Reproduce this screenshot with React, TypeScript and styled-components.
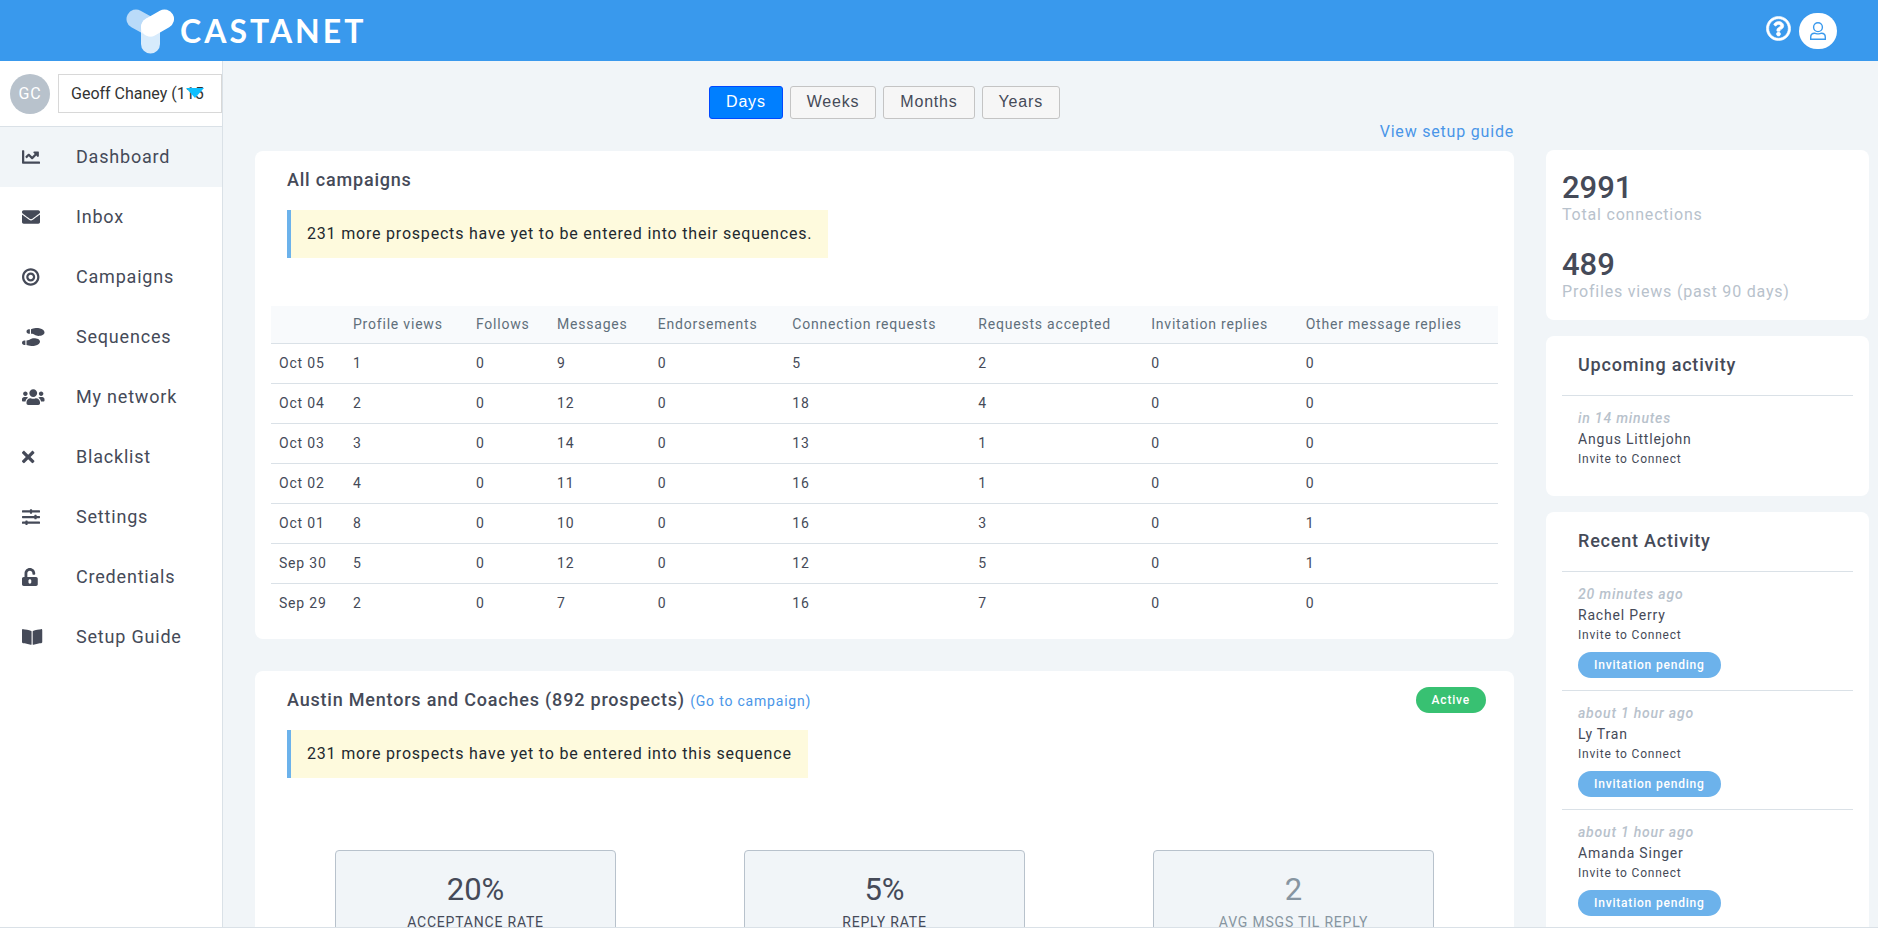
import React from 'react';
import styled, { createGlobalStyle, css } from 'styled-components';
import {
  FaChartLine,
  FaEnvelope,
  FaBullseye,
  FaShoePrints,
  FaUsers,
  FaTimes,
  FaSlidersH,
  FaUnlockAlt,
  FaBookOpen,
  FaRegQuestionCircle,
} from 'react-icons/fa';

const color = {
  brand: '#3999ed',
  canvas: '#f1f5f8',
  line: '#dae1e7',
  text: '#454a58',
  muted: '#8795a1',
  faint: '#b8c2cc',
  heading: '#606f7b',
  link: '#4a96e8',
  info: '#6cb2eb',
  success: '#38c172',
  note: '#fefadd',
};

const GlobalStyle = createGlobalStyle`
  *, *::before, *::after { box-sizing: border-box; }
  body {
    margin: 0;
    background: #fff;
    color: ${color.text};
    font: 400 16px/24px Roboto, sans-serif;
    letter-spacing: 0.05em;
  }
  h1, h2, p, ul, dl, dd { margin: 0; padding: 0; }
  ul { list-style: none; }
  button, select { font: inherit; letter-spacing: inherit; color: inherit; }
  a { color: ${color.link}; text-decoration: none; }
`;

const Page = styled.div`
  display: flex;
  flex-direction: column;
  height: 100vh;
  padding-bottom: 5px;
`;

const Header = styled.header`
  display: flex;
  flex: none;
  align-items: center;
  justify-content: space-between;
  height: 61px;
  padding: 0 41px 0 126px;
  background: ${color.brand};
  color: #fff;
`;

const Brand = styled.a`
  display: flex;
  align-items: center;
  gap: 5px;
  color: #fff;
  font: 700 32px/40px Lato, sans-serif;
  letter-spacing: 3px;
`;

const HeaderActions = styled.div`
  display: flex;
  align-items: center;
  gap: 8px;
`;

const HelpButton = styled.button`
  display: flex;
  padding: 0 0 4px;
  border: 0;
  background: none;
  color: #fff;
`;

const ProfileButton = styled.button`
  display: flex;
  align-items: center;
  justify-content: center;
  width: 38px;
  height: 36px;
  padding: 0;
  border: 0;
  border-radius: 18px;
  background: #fff;
  color: ${color.brand};
`;

const Body = styled.div`
  display: flex;
  flex: 1;
  min-height: 0;
  overflow: hidden;
  border-bottom: 1px solid ${color.line};
`;

const Sidebar = styled.aside`
  flex: none;
  width: 223px;
  border-right: 1px solid ${color.line};
  background: #fff;
`;

const Account = styled.div`
  display: flex;
  align-items: center;
  gap: 8px;
  height: 66px;
  padding-left: 10px;
  border-bottom: 1px solid ${color.line};
`;

const Avatar = styled.span`
  display: flex;
  flex: none;
  align-items: center;
  justify-content: center;
  width: 40px;
  height: 40px;
  border-radius: 50%;
  background: ${color.faint};
  color: #fff;
`;

const SelectWrap = styled.div`
  position: relative;
  flex: 1;
`;

const AccountSelect = styled.select`
  display: block;
  width: 100%;
  height: 39px;
  padding: 0 14px 0 12px;
  border: 1px solid #d8d8d8;
  border-radius: 0;
  appearance: none;
  background: #fff;
  color: #333;
  letter-spacing: 0;
`;

const Caret = styled.svg`
  position: absolute;
  top: 14px;
  right: 18px;
  pointer-events: none;
`;

const NavLink = styled.a<{ $active?: boolean }>`
  display: flex;
  align-items: center;
  height: 60px;
  padding-left: 22px;
  background: ${(p) => (p.$active ? color.canvas : 'transparent')};
  color: ${color.text};
  font-size: 18px;
`;

const NavIcon = styled.span`
  display: block;
  flex: none;
  width: 54px;
  line-height: 0;

  svg {
    width: 23px;
    height: 18px;
  }
`;

const Content = styled.div`
  display: flex;
  flex: 1;
  gap: 32px;
  align-items: flex-start;
  min-width: 0;
  padding: 0 9px 0 32px;
  background: ${color.canvas};
`;

const Main = styled.main`
  flex: 1;
  min-width: 0;
`;

const Ranges = styled.div`
  display: flex;
  justify-content: center;
  gap: 7px;
  padding-top: 25px;
`;

const RangeButton = styled.button<{ $active?: boolean }>`
  height: 33px;
  padding: 0 16px 2px;
  border: 1px solid #c4c4c4;
  border-radius: 3px;
  background: #f6f6f6;
  font-family: 'Liberation Sans', Arial, sans-serif;
  ${(p) =>
    p.$active &&
    css`
      border-color: #0048ff;
      background: #007fff;
      color: #fff;
    `}
`;

const GuideRow = styled.div`
  display: flex;
  justify-content: flex-end;
  padding: 1px 0 7px;
`;

const Card = styled.section`
  margin-bottom: 32px;
  padding: 16px;
  border-radius: 8px;
  background: #fff;
`;

const CardHead = styled.div`
  display: flex;
  align-items: center;
  justify-content: space-between;
  height: 26px;
  padding: 0 12px 0 16px;
`;

const Title = styled.h2`
  font-size: 18px;
  font-weight: 500;
  line-height: 26px;
`;

const CampaignLink = styled.a`
  font-size: 14px;
  font-weight: 400;
`;

const Badge = styled.span<{ $tone: string }>`
  display: inline-block;
  padding: 0 16px;
  border-radius: 13px;
  background: ${(p) => p.$tone};
  color: #fff;
  font-size: 12px;
  font-weight: 500;
  line-height: 26px;
`;

const Note = styled.p`
  width: fit-content;
  margin: 17px 16px 0;
  padding: 12px 16px;
  border-left: 4px solid ${color.info};
  background: ${color.note};
  color: #22292f;
`;

const Table = styled.table`
  width: 100%;
  margin-top: 48px;
  border-collapse: collapse;
  font-size: 14px;
  line-height: 23px;
  text-align: left;

  th,
  td {
    padding: 8px;
    font-weight: 400;
  }
  thead th {
    padding: 7px 8px;
    background: #f8fafc;
    color: ${color.heading};
  }
  tbody tr {
    border-top: 1px solid ${color.line};
  }
`;

const Stats = styled.div`
  display: grid;
  grid-template-columns: repeat(3, 1fr);
  margin-top: 72px;
`;

const StatBox = styled.div<{ $dim?: boolean }>`
  margin: 0 64px;
  padding: 20px 0 24px;
  border: 1px solid ${color.faint};
  border-radius: 4px;
  background: ${color.canvas};
  color: ${(p) => (p.$dim ? color.muted : color.text)};
  text-align: center;
`;

const StatValue = styled.p`
  font-size: 31px;
  line-height: 38px;
  letter-spacing: 0;
`;

const StatLabel = styled.p`
  margin-top: 1px;
  font-size: 14px;
  text-transform: uppercase;
`;

const Side = styled.aside`
  flex: none;
  width: 323px;
  padding-top: 89px;
`;

const SideCard = styled.section`
  margin-bottom: 16px;
  padding: 16px;
  border-radius: 8px;
  background: #fff;
`;

const MetricsCard = styled(SideCard)`
  display: flex;
  flex-direction: column;
  gap: 23px;
  padding: 20px 16px 19px;
`;

const MetricValue = styled.p`
  font-size: 31px;
  font-weight: 500;
  line-height: 36px;
  letter-spacing: 0;
`;

const MetricLabel = styled.p`
  line-height: 18px;
  color: ${color.faint};
`;

const SideTitle = styled(Title)`
  padding: 0 16px 17px;
`;

const Activity = styled.li`
  padding: 12px 16px;
  border-top: 1px solid ${color.line};
`;

const When = styled.p`
  color: ${color.faint};
  font-size: 14px;
  font-style: italic;
  font-weight: 500;
  line-height: 21px;
`;

const Who = styled.p`
  font-size: 14px;
  line-height: 21px;
`;

const What = styled.p`
  font-size: 12px;
  line-height: 18px;
`;

const Pending = styled(Badge)`
  display: block;
  width: fit-content;
  margin-top: 8px;
`;

const LogoMark = () => (
  <svg width="49" height="46" viewBox="0 0 49 46" aria-hidden="true">
    <g fill="none" stroke="#fff" strokeLinecap="round" strokeWidth="19">
      <path d="M10 11L24.500 19" opacity=".65" />
      <path d="M24.500 19V36" opacity=".8" />
      <path d="M24.500 19L38.500 11" />
    </g>
  </svg>
);

const PersonIcon = () => (
  <svg
    width="16"
    height="18"
    viewBox="0 0 16 18"
    fill="none"
    stroke="currentColor"
    strokeWidth="1.400"
    aria-hidden="true"
  >
    <circle cx="8" cy="5.200" r="4.400" />
    <path d="M.7 17.300V15.200C.7 12.800 2.300 11.300 4.600 11.300C5.800 11.300 6.500 11.900 8 11.900S10.200 11.300 11.400 11.300C13.700 11.300 15.300 12.800 15.300 15.200V17.300Z" />
  </svg>
);

const nav = [
  { label: 'Dashboard', Icon: FaChartLine },
  { label: 'Inbox', Icon: FaEnvelope },
  { label: 'Campaigns', Icon: FaBullseye },
  { label: 'Sequences', Icon: FaShoePrints },
  { label: 'My network', Icon: FaUsers },
  { label: 'Blacklist', Icon: FaTimes },
  { label: 'Settings', Icon: FaSlidersH },
  { label: 'Credentials', Icon: FaUnlockAlt },
  { label: 'Setup Guide', Icon: FaBookOpen },
];

const ranges = ['Days', 'Weeks', 'Months', 'Years'];

const columns = [
  'Profile views',
  'Follows',
  'Messages',
  'Endorsements',
  'Connection requests',
  'Requests accepted',
  'Invitation replies',
  'Other message replies',
];

const rows: [string, number[]][] = [
  ['Oct 05', [1, 0, 9, 0, 5, 2, 0, 0]],
  ['Oct 04', [2, 0, 12, 0, 18, 4, 0, 0]],
  ['Oct 03', [3, 0, 14, 0, 13, 1, 0, 0]],
  ['Oct 02', [4, 0, 11, 0, 16, 1, 0, 0]],
  ['Oct 01', [8, 0, 10, 0, 16, 3, 0, 1]],
  ['Sep 30', [5, 0, 12, 0, 12, 5, 0, 1]],
  ['Sep 29', [2, 0, 7, 0, 16, 7, 0, 0]],
];

const recent = [
  ['20 minutes ago', 'Rachel Perry'],
  ['about 1 hour ago', 'Ly Tran'],
  ['about 1 hour ago', 'Amanda Singer'],
];

export default function App() {
  const [range, setRange] = React.useState('Days');
  return (
    <Page>
      <GlobalStyle />
      <Header>
        <Brand href="#">
          <LogoMark />
          CASTANET
        </Brand>
        <HeaderActions>
          <HelpButton aria-label="Help">
            <FaRegQuestionCircle size={25} strokeWidth={12} />
          </HelpButton>
          <ProfileButton aria-label="Profile">
            <PersonIcon />
          </ProfileButton>
        </HeaderActions>
      </Header>
      <Body>
        <Sidebar>
          <Account>
            <Avatar>GC</Avatar>
            <SelectWrap>
              <AccountSelect aria-label="Account">
                <option>Geoff Chaney (115 connections)</option>
              </AccountSelect>
              <Caret width="18" height="10" viewBox="0 0 18 10" aria-hidden="true">
                <path d="M0 0H18L9 10Z" fill="#0fbfff" />
              </Caret>
            </SelectWrap>
          </Account>
          <nav>
            {nav.map(({ label, Icon }, i) => (
              <NavLink key={label} href="#" $active={i === 0}>
                <NavIcon>
                  <Icon preserveAspectRatio="xMinYMid meet" />
                </NavIcon>
                {label}
              </NavLink>
            ))}
          </nav>
        </Sidebar>
        <Content>
          <Main>
            <Ranges>
              {ranges.map((r) => (
                <RangeButton key={r} $active={r === range} onClick={() => setRange(r)}>
                  {r}
                </RangeButton>
              ))}
            </Ranges>
            <GuideRow>
              <a href="#">View setup guide</a>
            </GuideRow>
            <Card>
              <CardHead>
                <Title>All campaigns</Title>
              </CardHead>
              <Note>231 more prospects have yet to be entered into their sequences.</Note>
              <Table>
                <thead>
                  <tr>
                    <th aria-label="Date" />
                    {columns.map((c) => (
                      <th key={c} scope="col">
                        {c}
                      </th>
                    ))}
                  </tr>
                </thead>
                <tbody>
                  {rows.map(([day, values]) => (
                    <tr key={day}>
                      <th scope="row">{day}</th>
                      {values.map((v, i) => (
                        <td key={columns[i]}>{v}</td>
                      ))}
                    </tr>
                  ))}
                </tbody>
              </Table>
            </Card>
            <Card>
              <CardHead>
                <Title>
                  Austin Mentors and Coaches (892 prospects){' '}
                  <CampaignLink href="#">(Go to campaign)</CampaignLink>
                </Title>
                <Badge $tone={color.success}>Active</Badge>
              </CardHead>
              <Note>231 more prospects have yet to be entered into this sequence</Note>
              <Stats>
                <StatBox>
                  <StatValue>20%</StatValue>
                  <StatLabel>Acceptance rate</StatLabel>
                </StatBox>
                <StatBox>
                  <StatValue>5%</StatValue>
                  <StatLabel>Reply rate</StatLabel>
                </StatBox>
                <StatBox $dim>
                  <StatValue>2</StatValue>
                  <StatLabel>Avg msgs til reply</StatLabel>
                </StatBox>
              </Stats>
            </Card>
          </Main>
          <Side>
            <MetricsCard>
              <div>
                <MetricValue>2991</MetricValue>
                <MetricLabel>Total connections</MetricLabel>
              </div>
              <div>
                <MetricValue>489</MetricValue>
                <MetricLabel>Profiles views (past 90 days)</MetricLabel>
              </div>
            </MetricsCard>
            <SideCard>
              <SideTitle>Upcoming activity</SideTitle>
              <ul>
                <Activity>
                  <When>in 14 minutes</When>
                  <Who>Angus Littlejohn</Who>
                  <What>Invite to Connect</What>
                </Activity>
              </ul>
            </SideCard>
            <SideCard>
              <SideTitle>Recent Activity</SideTitle>
              <ul>
                {recent.map(([when, who]) => (
                  <Activity key={who}>
                    <When>{when}</When>
                    <Who>{who}</Who>
                    <What>Invite to Connect</What>
                    <Pending $tone={color.info}>Invitation pending</Pending>
                  </Activity>
                ))}
              </ul>
            </SideCard>
          </Side>
        </Content>
      </Body>
    </Page>
  );
}
